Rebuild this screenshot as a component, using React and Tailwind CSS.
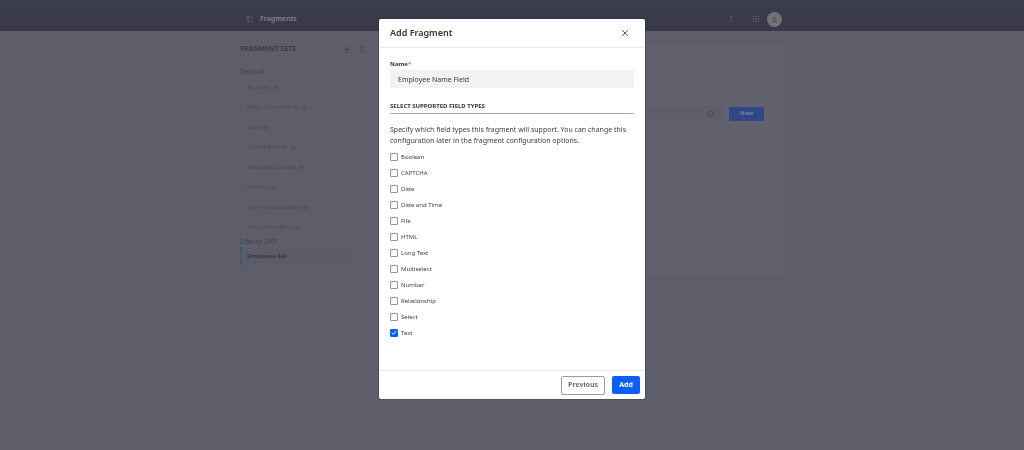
import { useState } from "react";
import { Check, EllipsisVertical, Grip, Lock, PanelLeft, Plus, Search, User, X } from "lucide-react";

const fragmentSets = [
  "Account",
  "Basic Components",
  "Card",
  "Cookie Banner",
  "Featured Content",
  "Footers",
  "Form Components",
  "Navigation Bars",
];

const fieldTypes = [
  "Boolean",
  "CAPTCHA",
  "Date",
  "Date and Time",
  "File",
  "HTML",
  "Long Text",
  "Multiselect",
  "Number",
  "Relationship",
  "Select",
  "Text",
];

function TopBar() {
  return (
    <header className="h-[31px] bg-linear-to-b from-[#3b3e4a] to-[#393848]">
      <div className="mx-auto flex h-full max-w-[544px] items-center pt-[7px] text-[#696876]">
        <button aria-label="Toggle menu" className="ml-1.5">
          <PanelLeft className="size-[7px]" />
        </button>
        <h1 className="ml-[7px] flex-1 text-[7px] font-semibold text-[#858491]">Fragments</h1>
        <button aria-label="Options">
          <EllipsisVertical className="size-2" />
        </button>
        <button aria-label="Applications" className="ml-[17px]">
          <Grip className="size-2" />
        </button>
        <button
          aria-label="User"
          className="mr-0.5 ml-[7px] flex size-[15px] items-center justify-center rounded-full bg-[#727179]"
        >
          <User className="size-[7px] fill-current text-[#5f564f]" />
        </button>
      </div>
    </header>
  );
}

function Sidebar() {
  return (
    <aside className="w-[130px] shrink-0 pt-3">
      <div className="flex h-3 items-center text-[#3a3a49]">
        <h2 className="flex-1 text-[7px] font-bold whitespace-nowrap">FRAGMENT SETS</h2>
        <button aria-label="Add set">
          <Plus className="size-[9px]" />
        </button>
        <button aria-label="Set options" className="mr-1 ml-1.5">
          <EllipsisVertical className="size-[9px]" />
        </button>
      </div>

      <h3 className="mt-3 h-[10px] text-[7px] leading-[10px] text-[#3f3f4d]">Default</h3>
      <ul>
        {fragmentSets.map((set) => (
          <li key={set} className="flex h-5 items-center pl-[7px]">
            <a href="#" className="flex items-center gap-[3px] text-[6px] text-[#4a4a57]">
              {set}
              <Lock className="size-[5px]" />
            </a>
          </li>
        ))}
      </ul>

      <h3 className="h-[10px] text-[7px] leading-[10px] text-[#3f3f4d]">Liferay DXP</h3>
      <a
        href="#"
        className="mr-[18px] flex h-[18px] items-center border-l-2 border-[#40557f] bg-[#5c5c69] pl-[5px] text-[6px] font-bold text-[#363645]"
      >
        Employee Set
      </a>
    </aside>
  );
}

function Content() {
  return (
    <main className="mt-[13px] ml-4 h-[232px] flex-1 bg-[#62626f] pt-[62px] pr-5">
      <div className="flex items-center gap-1.5">
        <div className="flex h-[15px] flex-1 items-center bg-[#5f5f6c] pr-2">
          <input aria-label="Search" className="h-full min-w-0 flex-1 bg-transparent text-[7px] outline-none" />
          <button aria-label="Search fragments">
            <Search className="size-2 text-[#40404e]" />
          </button>
        </div>
        <button className="h-[14px] w-[35px] bg-[#324885] text-[6px] font-bold text-[#7280a6]">New</button>
      </div>
    </main>
  );
}

function AddFragmentModal() {
  const [name, setName] = useState("Employee Name Field");
  const [selected, setSelected] = useState(["Text"]);

  const toggle = (type) => {
    setSelected((prev) => (prev.includes(type) ? prev.filter((t) => t !== type) : [...prev, type]));
  };

  return (
    <div className="fixed inset-0 flex items-start justify-center pt-[19px]">
      <div
        role="dialog"
        aria-label="Add Fragment"
        className="w-[266px] rounded-xs bg-white text-[#33333d] shadow-[0_0_2px_#33333d]"
      >
        {/* Header */}
        <div className="flex h-[29px] items-center justify-between border-b border-[#e9eaee] pr-[15px] pl-[11px]">
          <h2 className="text-[9px] font-semibold">Add Fragment</h2>
          <button aria-label="Close">
            <X className="size-[10px]" />
          </button>
        </div>

        {/* Body */}
        <div className="px-[11px] pt-[11px] pb-[29px]">
          <label htmlFor="name" className="flex h-[10px] items-center text-[6px] font-bold">
            Name<span className="text-[#c46a32]">*</span>
          </label>
          <input
            id="name"
            value={name}
            onChange={(e) => setName(e.target.value)}
            className="mt-px block h-[18px] w-full rounded-xs bg-[#f0f2f3] px-2 text-[7px] text-[#3c3c47] outline-none"
          />

          <h3 className="mt-3 flex h-[14px] items-center border-b border-[#aaaab0] text-[6px] font-bold">
            SELECT SUPPORTED FIELD TYPES
          </h3>
          <p className="mt-[10px] text-[7px] leading-[11px] text-[#3c3c47]">
            Specify which field types this fragment will support. You can change this configuration later in the
            fragment configuration options.
          </p>

          <ul className="mt-[3px]">
            {fieldTypes.map((type) => (
              <li key={type} className="flex h-4 items-center">
                <label className="flex items-center gap-[3px] text-[6px] leading-[8px] text-[#3c3c47]">
                  <span className="grid size-2">
                    <input
                      type="checkbox"
                      checked={selected.includes(type)}
                      onChange={() => toggle(type)}
                      className="peer col-start-1 row-start-1 size-2 appearance-none rounded-[1px] border border-[#96969d] bg-white checked:border-[#0b5fff] checked:bg-[#0b5fff]"
                    />
                    <Check
                      strokeWidth={4}
                      className="pointer-events-none invisible col-start-1 row-start-1 size-1.5 place-self-center text-white peer-checked:visible"
                    />
                  </span>
                  {type}
                </label>
              </li>
            ))}
          </ul>
        </div>

        {/* Footer */}
        <div className="flex h-[29px] items-center justify-end gap-[7px] border-t border-[#e9eaee] px-[5px]">
          <button className="h-[19px] w-11 rounded-xs border border-[#9b9ba3] text-[7px] font-bold text-[#6b6c7e]">
            Previous
          </button>
          <button className="h-[18px] w-7 rounded-xs bg-[#0b5fff] text-[7px] font-bold text-white">Add</button>
        </div>
      </div>
    </div>
  );
}

export default function App() {
  return (
    <div className="min-h-screen bg-[#5e5e6b] font-['Noto_Sans',sans-serif]">
      <TopBar />
      <div className="mx-auto flex max-w-[544px]">
        <Sidebar />
        <Content />
      </div>
      <AddFragmentModal />
    </div>
  );
}
